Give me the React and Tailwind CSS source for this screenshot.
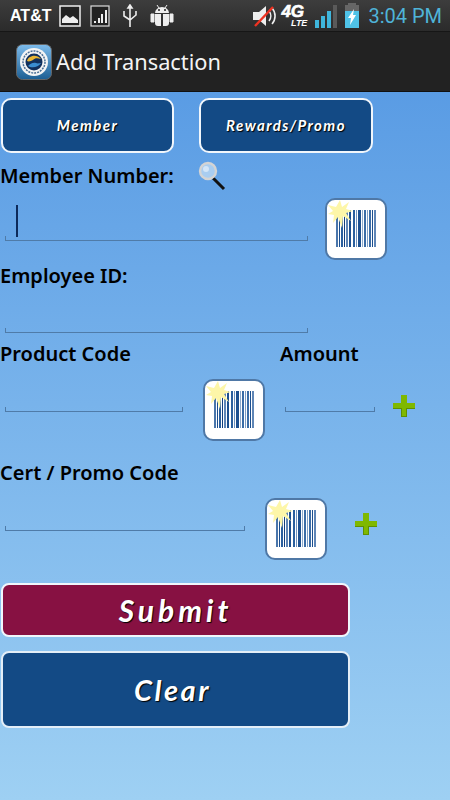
import React from 'react';

const sans = 'font-["Noto_Sans",sans-serif]';
const script = 'font-["Lato",cursive] font-bold italic';

// Barcode scanner button with the yellow flash
const Barcode = ({ className = '' }) => (
  <div className={`w-[62px] h-[62px] shrink-0 rounded-[10px] bg-white border-2 border-[#4f78a6] ${className}`}>
    <svg width="58" height="58" viewBox="0 0 58 58">
      {[[9,2,'#4a76ab'],[12,1,'#1c4f8f'],[14,2,'#2a5f9e'],[17,1,'#123f7f'],[19,2,'#5f86b6'],[22,2,'#1c4f8f'],[26,2,'#2a5f9e'],[29,1,'#6f93bf'],[31,3,'#1c4f8f'],[35,1,'#8fabcc'],[37,2,'#3a6ca6'],[40,1,'#7e9fc6'],[42,2,'#3a6ca6'],[45,1,'#1c4f8f'],[47,2,'#5f86b6']].map(([x, w, c]) => (
        <rect key={x} x={x} y="10" width={w} height="37" fill={c} />
      ))}
      <polygon
        points="13,0 15,7 22,2 19,9 26,11 19,13 24,21 16,16 15,28 11,17 6,23 7,15 1,14 6,11 1,5 9,7"
        fill="#fdf6a8"
      />
    </svg>
  </div>
);

const Plus = ({ className = '' }) => (
  <svg className={className} width="24" height="24" viewBox="0 0 24 24">
    <path d="M9 1h6v8h8v6h-8v8H9v-8H1V9h8z" fill="#7fb800" />
    <path d="M9 15H1v-1h9v8h4v-8h9v1h-8v8H9z" fill="#5f9000" />
  </svg>
);

// Android style underlined edit box with small end ticks
const Field = ({ className = '', caret }) => (
  <div className={`relative h-[5px] border-b border-x border-[#4f7ba8] ${className}`}>
    {caret && <div className="absolute left-[10px] bottom-[3px] w-[2px] h-[32px] bg-[#0d2a5a]" />}
  </div>
);

const Label = ({ children, className = '' }) => (
  <span className={`text-[20px] leading-[28px] font-semibold text-black ${sans} ${className}`}>{children}</span>
);

const StatusBar = () => (
  <div className="h-[32px] shrink-0 flex items-center pl-[10px] pr-[8px] bg-gradient-to-b from-[#3d3d3d] to-[#2b2b2b] border-b border-[#161616]">
    <span className='w-[42px] text-[16px] font-bold text-white font-["Liberation_Sans",sans-serif]'>AT&amp;T</span>
    <svg className="ml-[7px]" width="22" height="22" viewBox="0 0 22 22">
      <rect x="1" y="1" width="20" height="20" fill="#222" stroke="#eee" strokeWidth="1.5" />
      <path d="M3 18v-4l4-4 4 3 3-2 5 4v3z" fill="#eee" />
    </svg>
    <svg className="ml-[9px]" width="20" height="22" viewBox="0 0 20 22">
      <rect x="1" y="1" width="18" height="20" fill="#222" stroke="#ddd" strokeWidth="1.2" />
      <path d="M4 16h2v2H4zM8 13h2v5H8zM11 9h2v9h-2zM15 5h2v13h-2z" fill="#eee" />
    </svg>
    <svg className="ml-[13px]" width="14" height="24" viewBox="0 0 14 24">
      <path d="M7 1v22M1 7v5l6 4 6-5V7M7 1L5 4h4z" fill="none" stroke="#eee" strokeWidth="1.6" />
    </svg>
    <svg className="ml-[13px]" width="24" height="24" viewBox="0 0 24 24">
      <path d="M5 9a7 6 0 0 1 14 0z" fill="#eee" />
      <path d="M5 10h6v12H8a3 3 0 0 1-3-3zM13 10h6v9a3 3 0 0 1-3 3h-3z" fill="#eee" />
      <path d="M1 10h3v8H1zM20 10h3v8h-3zM7 1l2 3M17 1l-2 3" stroke="#eee" fill="#eee" />
      <circle cx="9" cy="6" r="1" fill="#222" />
      <circle cx="15" cy="6" r="1" fill="#222" />
    </svg>
    <div className="flex-1" />
    <svg width="26" height="24" viewBox="0 0 26 24">
      <path d="M1 8h6l7-6v20l-7-6H1z" fill="#eee" />
      <path d="M17 7a8 8 0 0 1 0 10M20 4a12 12 0 0 1 0 16" fill="none" stroke="#eee" strokeWidth="1.6" />
      <path d="M3 22L21 3" stroke="#ee3322" strokeWidth="2.4" />
    </svg>
    <div className="relative ml-[3px] w-[26px] h-[24px]">
      <span className='absolute left-0 top-[1px] text-[17px] leading-[13px] font-bold italic text-white [-webkit-text-stroke:0.6px_#fff] font-["Liberation_Sans",sans-serif]'>4G</span>
      <span className='absolute right-0 top-[15px] text-[9px] leading-[8px] font-bold italic text-white font-["Liberation_Sans",sans-serif]'>LTE</span>
    </div>
    <svg className="ml-[6px]" width="25" height="26" viewBox="0 0 25 26">
      <path d="M2 17h4v8H2zM8 13h4v12H8zM14 8h4v17h-4z" fill="#3fb6dc" />
      <path d="M20 2h4v23h-4z" fill="#5a5a5a" />
    </svg>
    <svg className="ml-[6px]" width="16" height="25" viewBox="0 0 16 25">
      <path d="M4 0h8v3H4z" fill="#666" />
      <path d="M1 2h14v6H1z" fill="#666" />
      <path d="M1 8h14v17H1z" fill="#4fc3e8" />
      <path d="M10 6L4 15h3l-1 7 6-10H9z" fill="#fff" />
    </svg>
    <span className='ml-[8px] text-[20px] text-[#4fb4d8] font-["Roboto",sans-serif]'>3:04 PM</span>
  </div>
);

const ActionBar = () => (
  <div className="h-[60px] shrink-0 flex items-center pl-[16px] bg-[#222222] border-b border-[#111]">
    <svg width="36" height="36" viewBox="0 0 36 36">
      <defs>
        <linearGradient id="logo" x1="0" y1="0" x2="0" y2="1">
          <stop offset="0" stopColor="#7dbcec" />
          <stop offset="1" stopColor="#1d5f94" />
        </linearGradient>
      </defs>
      <rect x="0.5" y="0.5" width="35" height="35" rx="6" fill="url(#logo)" stroke="#666" />
      <circle cx="18" cy="18" r="14" fill="#f4f4f4" />
      <circle cx="18" cy="18" r="11" fill="none" stroke="#4a6f96" strokeWidth="1.5" strokeDasharray="2 1" />
      <circle cx="18" cy="18" r="8.5" fill="#12305c" />
      <path d="M11 17c1-5 9-8 14-2-4-1-6-1-8 1-2 1-4 2-6 1z" fill="#e8b531" />
      <path d="M12 22c3 2 10 2 13-3-1 0-3 1-5 0-3-1-6 1-8 3z" fill="#3a8dd0" />
    </svg>
    <span className='ml-[4px] pt-[1px] text-[21.8px] text-[#f4f4f4] font-["Noto_Sans",sans-serif]'>Add Transaction</span>
  </div>
);

const TabButton = ({ children, className = '' }) => (
  <button className={`h-[55px] rounded-[10px] border-2 border-[#f1f6fb] bg-[#134a85] text-white text-[15px] tracking-[1.4px] ${script} [text-shadow:1px_1px_1px_#000] ${className}`}>
    {children}
  </button>
);

const App = () => (
  <div className="w-[450px] h-[800px] flex flex-col overflow-hidden">
    <StatusBar />
    <ActionBar />

    <main className="flex-1 flex flex-col bg-gradient-to-b from-[#5a9ce4] to-[#9ed0f3]">
      <div className="flex mt-[6px] ml-[1px]">
        <TabButton className="w-[173px]">Member</TabButton>
        <TabButton className="w-[174px] ml-[25px]">Rewards/Promo</TabButton>
      </div>

      {/* Member number */}
      <div className="h-[45px] flex items-center pt-[1px]">
        <Label>Member Number:</Label>
        <svg className="ml-[24px]" width="30" height="32" viewBox="0 0 30 32">
          <path d="M15 18l11 11" stroke="#111" strokeWidth="3" />
          <circle cx="10" cy="11" r="8" fill="#a9cdf0" stroke="#d4d4d4" strokeWidth="2.4" />
          <circle cx="8" cy="9" r="3" fill="#d4e6f8" />
        </svg>
      </div>
      <div className="h-[62px] flex items-start">
        <Field caret className="w-[303px] ml-[5px] mt-[38px]" />
        <Barcode className="ml-[17px]" />
      </div>

      {/* Employee */}
      <div className="h-[32px] flex items-center">
        <Label>Employee ID:</Label>
      </div>
      <Field className="w-[303px] ml-[5px] mt-[36px]" />

      {/* Product and amount */}
      <div className="h-[46px] flex items-start pt-[7px]">
        <Label className="w-[280px]">Product Code</Label>
        <Label>Amount</Label>
      </div>
      <div className="h-[62px] flex items-start">
        <Field className="w-[178px] ml-[5px] mt-[28px]" />
        <Barcode className="ml-[20px]" />
        <Field className="w-[90px] ml-[20px] mt-[28px]" />
        <Plus className="ml-[17px] mt-[15px]" />
      </div>

      {/* Cert and promo */}
      <div className="h-[57px] flex items-start pt-[18px]">
        <Label>Cert / Promo Code</Label>
      </div>
      <div className="h-[62px] flex items-start">
        <Field className="w-[240px] ml-[5px] mt-[28px]" />
        <Barcode className="ml-[20px]" />
        <Plus className="ml-[27px] mt-[14px]" />
      </div>

      <button className={`w-[349px] h-[54px] ml-[1px] mt-[23px] rounded-[8px] border-2 border-[#f1f6fb] bg-[#871142] text-white text-[30px] tracking-[4px] ${script} [text-shadow:1px_1px_1px_#000]`}>
        Submit
      </button>
      <button className={`w-[349px] h-[77px] ml-[1px] mt-[14px] rounded-[8px] border-2 border-[#e4eef7] bg-[#134a85] text-white text-[29px] tracking-[2.5px] pr-[6px] ${script} [text-shadow:1px_1px_1px_#000]`}>
        Clear
      </button>
    </main>
  </div>
);

export default App;
